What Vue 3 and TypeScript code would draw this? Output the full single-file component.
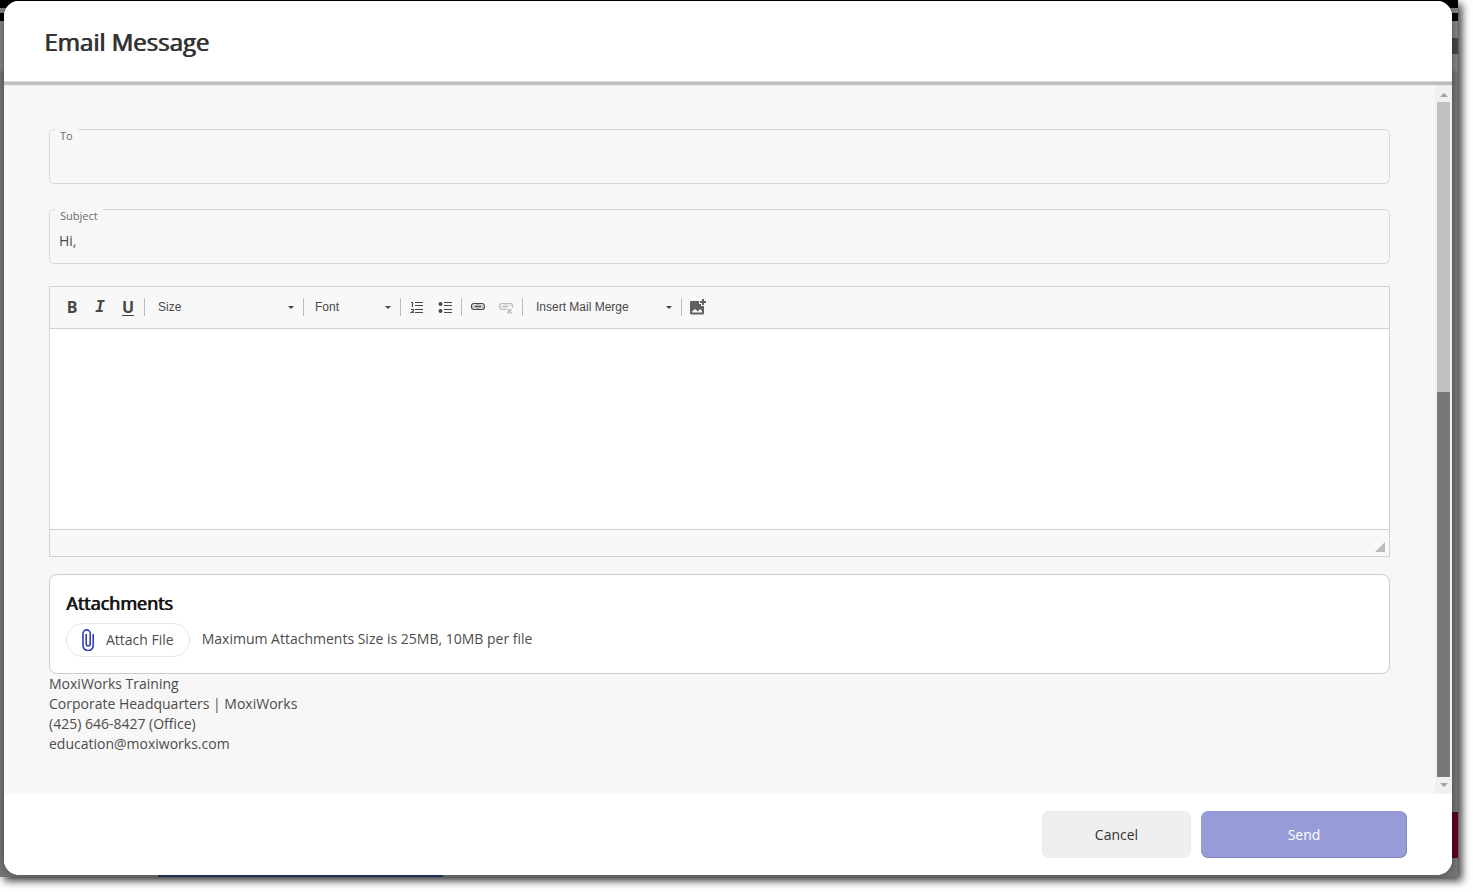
<script setup lang="ts">
import { ref } from 'vue'

const to = ref('')
const subject = ref('Hi,')
const message = ref('')
const size = ref('Size')
const font = ref('Font')
const merge = ref('Insert Mail Merge')

const signature: string[] = [
  'MoxiWorks Training',
  'Corporate Headquarters | MoxiWorks',
  '(425) 646-8427 (Office)',
  'education@moxiworks.com',
]
</script>

<template>
  <div class="page">
    <div class="backdrop">
      <span class="strip-blue"></span>
      <span class="strip-dark"></span>
      <span class="strip-maroon"></span>
      <section class="modal" role="dialog" aria-labelledby="dialog-title">
        <header class="modal-header">
          <h1 id="dialog-title">Email Message</h1>
        </header>

        <div class="modal-body">
          <form class="content" @submit.prevent>
            <div class="field">
              <label for="to">To</label>
              <input id="to" v-model="to" type="text" />
            </div>
            <div class="field">
              <label for="subject">Subject</label>
              <input id="subject" v-model="subject" type="text" />
            </div>

            <div class="editor">
              <div class="toolbar" role="toolbar" aria-label="Formatting">
                <div class="tools">
                  <button type="button" class="tool bold" aria-label="Bold">B</button>
                  <button type="button" class="tool italic" aria-label="Italic">I</button>
                  <button type="button" class="tool underline" aria-label="Underline">U</button>
                </div>
                <div class="picker picker-size">
                  <select v-model="size" aria-label="Size"><option>Size</option></select>
                  <svg viewBox="0 0 6 3"><path d="M0 0h6L3 3z" /></svg>
                </div>
                <div class="picker picker-font">
                  <select v-model="font" aria-label="Font"><option>Font</option></select>
                  <svg viewBox="0 0 6 3"><path d="M0 0h6L3 3z" /></svg>
                </div>
                <div class="tools divided">
                  <button type="button" class="tool" aria-label="Numbered list">
                    <svg viewBox="0 0 16 16">
                      <path d="M6 3.5h8M6 6.5h8M6 10.5h8M6 13.5h8" class="line" />
                      <path d="M2 3.5h1.5V8M2 10.5h2.5v1.2L2.5 13.5h2.5" class="line" />
                    </svg>
                  </button>
                  <button type="button" class="tool" aria-label="Bulleted list">
                    <svg viewBox="0 0 16 16">
                      <path d="M7 3.5h8M7 6.5h8M7 10.5h8M7 13.5h8" class="line" />
                      <circle cx="3.5" cy="5" r="2" /><circle cx="3.5" cy="12" r="2" />
                    </svg>
                  </button>
                </div>
                <div class="tools divided">
                  <button type="button" class="tool" aria-label="Link">
                    <svg viewBox="0 0 16 16">
                      <path d="M7.500 5.500V4.500H4Q1.500 4.500 1.500 7.500T4 10.500h3.500V9.500M8.500 5.500V4.500H12Q14.500 4.500 14.500 7.500T12 10.500H8.500V9.500" class="line" />
                      <path d="M7 6H5Q3.500 6 3.500 7.500T5 9h2M9 6h2Q12.500 6 12.500 7.500T11 9H9" class="line thin" />
                      <path d="M5 7.500h6" class="line link-bar" />
                    </svg>
                  </button>
                  <button type="button" class="tool" aria-label="Unlink" disabled>
                    <svg viewBox="0 0 16 16">
                      <path d="M7.500 5.500V4.500H4Q1.500 4.500 1.500 7.500T4 10.500h3.500V9.500M8.500 5.500V4.500H12Q14.500 4.500 14.500 7V9" class="line" />
                      <path d="M7 6H5Q3.500 6 3.500 7.500T5 9h2M9 6h2Q12.500 6 12.500 7.500" class="line thin" />
                      <path d="M5 7.500h5" class="line link-bar" />
                      <path d="M9.500 10l4 4.500M13.500 10l-4 4.500" class="line link-bar" />
                    </svg>
                  </button>
                </div>
                <div class="picker picker-merge">
                  <select v-model="merge" aria-label="Mail merge"><option>Insert Mail Merge</option></select>
                  <svg viewBox="0 0 6 3"><path d="M0 0h6L3 3z" /></svg>
                </div>
                <div class="tools divided">
                  <button type="button" class="tool picture" aria-label="Insert image">
                    <svg viewBox="0 0 16 16">
                      <path fill-rule="evenodd" d="M1 2h8v3h2v2h3v7q0 1.500-1.500 1.500h-11Q0 15.500 0 14V3q0-1 1-1zM2 13.500h10V12L10 10 8 12.500 5 10 2 12.500z" />
                      <path d="M13 0v6M10 3h6" class="line plus" />
                    </svg>
                  </button>
                </div>
              </div>
              <textarea v-model="message" aria-label="Message"></textarea>
              <div class="status">
                <svg viewBox="0 0 10 10"><path d="M10 0v10H0z" /></svg>
              </div>
            </div>

            <section class="attachments">
              <h2>Attachments</h2>
              <div class="attach-row">
                <button type="button" class="attach">
                  <svg viewBox="0 0 12 22">
                    <path d="M11.200 5v11.500a5.100 5.100 0 0 1-10.200 0V4.500a3.600 3.600 0 0 1 7.200 0v10.500a2 2 0 0 1-4 0V5" />
                  </svg>
                  Attach File
                </button>
                <p>Maximum Attachments Size is 25MB, 10MB per file</p>
              </div>
            </section>

            <address>
              <div v-for="line in signature" :key="line">{{ line }}</div>
            </address>
          </form>

          <div class="scrollbar" aria-hidden="true">
            <svg viewBox="0 0 8 4"><path d="M4 0l4 4H0z" /></svg>
            <div class="track"><div class="thumb"></div></div>
            <svg viewBox="0 0 8 4"><path d="M0 0h8L4 4z" /></svg>
          </div>
        </div>

        <footer class="modal-footer">
          <button type="button" class="cancel">Cancel</button>
          <button type="button" class="send">Send</button>
        </footer>
      </section>
    </div>
  </div>
</template>

<style>
body {
  margin: 0;
  background: #fff;
}
</style>

<style scoped>
* {
  box-sizing: border-box;
}
.page {
  display: flex;
  min-height: 100vh;
  padding: 0 15px 15px 0;
  font-family: 'Open Sans', 'Noto Sans', sans-serif;
  font-size: 14px;
  line-height: 20px;
  color: #4c4c4c;
}
.backdrop {
  position: relative;
  display: flex;
  flex: 1;
  padding: 1px 6px 2px 4px;
  background: linear-gradient(#000 0 8px, #808080 8px 13px, #000 13px 21px, #808080 21px 71px, #737373 71px);
  box-shadow: 4px 4px 8px rgba(0, 0, 0, 0.75);
}
.strip-blue,
.strip-dark,
.strip-maroon {
  position: absolute;
}
.strip-blue {
  left: 158px;
  bottom: 0;
  width: 285px;
  height: 4px;
  background: #243c66;
}
.strip-dark {
  right: 0;
  top: 38px;
  width: 12px;
  height: 16px;
  background: #444;
}
.strip-maroon {
  right: 0;
  bottom: 19px;
  width: 12px;
  height: 46px;
  background: #5c0028;
}
.modal {
  position: relative;
  display: flex;
  flex: 1;
  flex-direction: column;
  min-width: 0;
  overflow: hidden;
  border-radius: 15px;
  background: #fff;
  box-shadow: 0 0 6px rgba(0, 0, 0, 0.4);
}
.modal-header {
  position: relative;
  z-index: 1;
  padding: 23px 40px 21px;
  border-bottom: 1px solid #d8d8d8;
  background: #fff;
  box-shadow: 0 3px 1px rgba(0, 0, 0, 0.22);
}
h1 {
  margin: 0;
  font-size: 24px;
  line-height: 36px;
  font-weight: 400;
  color: #333;
  text-shadow: 1px 0 0 currentColor;
}
.modal-body {
  display: flex;
  flex: 1;
  background: #f7f7f7;
}
.content {
  flex: 1;
  min-width: 0;
  padding: 47px 45px 40px;
}
.field {
  height: 55px;
  margin-bottom: 25px;
  border: 1px solid #d8d8d8;
  border-radius: 5px;
}
.field + .editor {
  margin-top: -3px;
}
.field label {
  display: block;
  width: fit-content;
  margin: -1px 0 0 5px;
  padding: 0 5px;
  background: #f7f7f7;
  font-size: 11px;
  line-height: 14px;
  color: #6c6c6c;
}
.field input {
  display: block;
  width: 100%;
  height: 34px;
  padding: 0 9px;
  border: 0;
  outline: 0;
  background: transparent;
  font: inherit;
  color: #4c4c4c;
}
.editor {
  border: 1px solid #d1d1d1;
  background: #f8f8f8;
}
.toolbar {
  display: flex;
  align-items: center;
  height: 42px;
  padding: 0 0 2px 6px;
  border-bottom: 1px solid #d1d1d1;
}
.tools {
  display: flex;
  padding: 0 2px;
}
.divided,
.picker {
  border-left: 1px solid #bcbcbc;
}
.tool {
  display: flex;
  align-items: center;
  justify-content: center;
  width: 28px;
  height: 18px;
  padding: 0;
  border: 0;
  background: transparent;
  font-family: 'Open Sans', sans-serif;
  font-size: 16px;
  line-height: 18px;
  font-weight: 700;
  color: #484848;
}
.tool svg {
  width: 16px;
  height: 16px;
  fill: currentColor;
}
.tool:disabled {
  color: #bbb;
}
.picture {
  color: #606060;
}
.line {
  fill: none;
  stroke: currentColor;
  stroke-width: 1.2;
}
.thin {
  opacity: 0.4;
}
.link-bar {
  stroke-width: 1.5;
}
.plus {
  stroke-width: 2;
}
.italic {
  font-family: 'DejaVu Sans Mono', monospace;
  font-style: italic;
}
.underline {
  text-decoration: underline;
  text-decoration-thickness: 1px;
  text-underline-offset: 2px;
}
.picker {
  position: relative;
  height: 18px;
}
.picker-size,
.picker-merge {
  width: 159px;
}
.picker-font {
  width: 97px;
}
.picker select {
  display: block;
  width: 100%;
  height: 18px;
  padding: 0 20px 0 13px;
  border: 0;
  appearance: none;
  background: transparent;
  font-family: 'Liberation Sans', Arial, sans-serif;
  font-size: 12px;
  line-height: 18px;
  color: #484848;
}
.picker-font select {
  padding-left: 11px;
}
.picker svg {
  position: absolute;
  right: 9px;
  top: 8px;
  width: 6px;
  height: 3px;
  fill: #484848;
  pointer-events: none;
}
textarea {
  display: block;
  width: 100%;
  height: 200px;
  padding: 20px;
  border: 0;
  outline: 0;
  resize: none;
  background: #fff;
  font: inherit;
}
.status {
  display: flex;
  align-items: flex-end;
  justify-content: flex-end;
  height: 27px;
  padding: 4px;
  border-top: 1px solid #d1d1d1;
}
.status svg {
  width: 10px;
  height: 10px;
  fill: #bbb;
}
.attachments {
  margin-top: 17px;
  padding: 16px;
  border: 1px solid #ccc;
  border-radius: 8px;
  background: #fff;
}
h2 {
  margin: 0 0 8px;
  font-size: 18px;
  line-height: 24px;
  font-weight: 400;
  color: #111;
  text-shadow: 1px 0 0 currentColor;
}
.attach-row {
  display: flex;
  align-items: center;
  gap: 12px;
}
.attach-row p {
  margin: 0 0 2px;
}
.attach {
  display: flex;
  align-items: center;
  gap: 12px;
  height: 34px;
  padding: 0 15px;
  border: 1px solid #e6e6e6;
  border-radius: 17px;
  background: #fff;
  font: inherit;
  color: inherit;
}
.attach svg {
  width: 12px;
  height: 22px;
  fill: none;
  stroke: #303fb8;
  stroke-width: 1.6;
}
address {
  font-style: normal;
}
.scrollbar {
  display: flex;
  flex-direction: column;
  align-items: center;
  width: 17px;
  padding: 11px 2px 7px;
  background: #f1f1f1;
}
.scrollbar svg {
  width: 8px;
  height: 4px;
  fill: #a3a3a3;
}
.track {
  flex: 1;
  width: 13px;
  margin: 5px 0 6px;
  background: #787878;
}
.thumb {
  height: 43%;
  background: #c1c1c1;
}
.modal-footer {
  display: flex;
  justify-content: flex-end;
  gap: 10px;
  padding: 17px 45px;
  background: #fff;
}
.modal-footer button {
  height: 47px;
  border-radius: 7px;
  font: inherit;
}
.modal-footer .cancel {
  width: 149px;
  border: 1px solid #ebebeb;
  background: #efefef;
  color: #333;
}
.modal-footer .send {
  width: 206px;
  border: 1px solid #979cd9;
  border-right-color: #8085b5;
  border-bottom-color: #8085b5;
  background: #979cd9;
  font-weight: 500;
  color: #fff;
}
</style>
